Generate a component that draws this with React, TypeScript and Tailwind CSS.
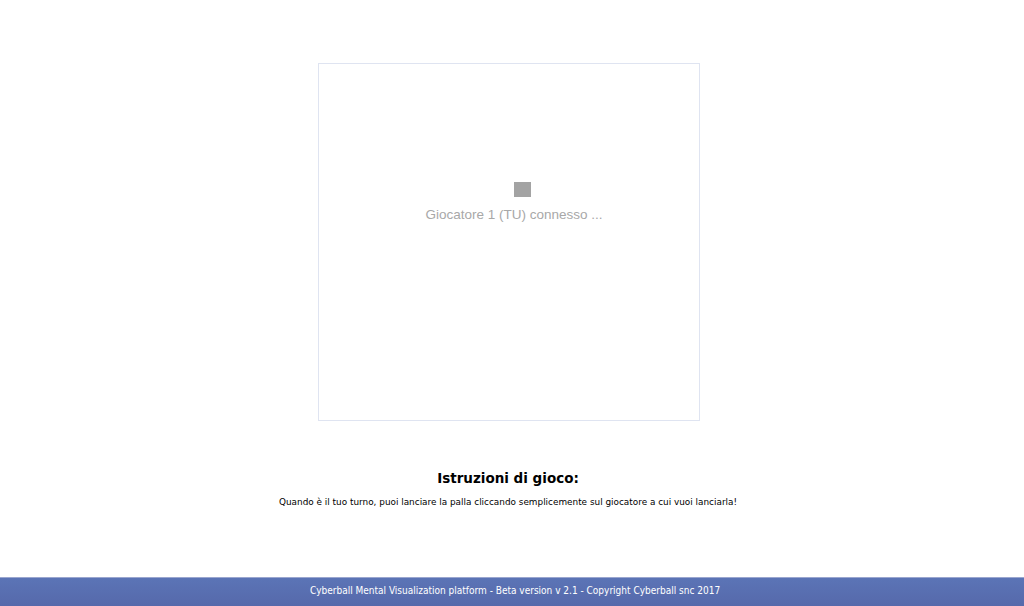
import React from 'react';

export default function App() {
  return (
    <div className="w-[1024px] h-[606px] bg-white flex flex-col overflow-hidden">
      <div className="flex-1 flex flex-col items-center pr-[8px]">
        <div className="mt-[63px] ml-[2px] w-[382px] h-[358px] border border-[#dfe4f1] flex flex-col items-center">
          <div className="mt-[118px] ml-[26px] w-[17px] h-[15px] bg-[#a3a3a3]" />
          <p className="mt-[8px] ml-[10px] text-[13.5px] text-[#a8a8a8] font-['Liberation_Sans',sans-serif]">
            Giocatore 1 (TU) connesso ...
          </p>
        </div>
        <h2 className="mt-[47px] text-[13.5px] font-bold text-black font-['DejaVu_Sans',Verdana,sans-serif]">
          Istruzioni di gioco:
        </h2>
        <p className="mt-[8px] text-[8.9px] text-black font-['DejaVu_Sans',Verdana,sans-serif]">
          Quando è il tuo turno, puoi lanciare la palla cliccando semplicemente sul giocatore a cui vuoi lanciarla!
        </p>
      </div>
      <footer className="h-[29px] pb-[3px] pl-[6px] border-t border-[#9aa6cf] bg-gradient-to-b from-[#5b74b6] to-[#5669ab] flex items-center justify-center">
        <span className="text-[10px] text-white font-['DejaVu_Sans_Condensed',sans-serif]">
          Cyberball Mental Visualization platform - Beta version v 2.1 - Copyright Cyberball snc 2017
        </span>
      </footer>
    </div>
  );
}
